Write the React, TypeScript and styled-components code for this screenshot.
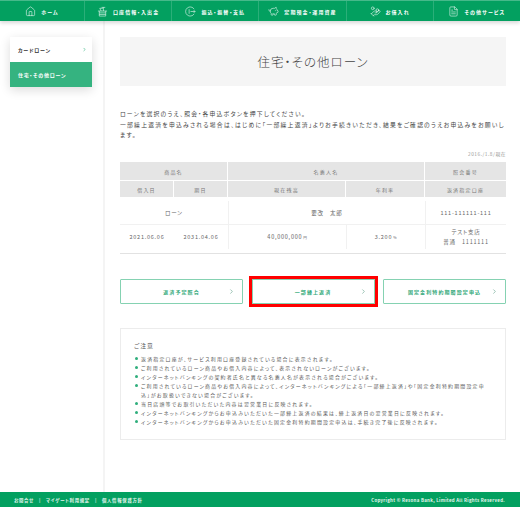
import { Fragment } from 'react';
import styled, { createGlobalStyle } from 'styled-components';
import { ChevronRight, FileText, HandCoins, Home, PiggyBank } from 'lucide-react';

const GREEN = '#03a060';
const FONT = `"Noto Sans CJK JP", "Noto Sans", "Liberation Sans", sans-serif`;

const GlobalStyle = createGlobalStyle`
  html, body {
    margin: 0;
    height: 507px;
    overflow: hidden;
    background: #fff;
  }
  * {
    box-sizing: border-box;
  }
`;

const Page = styled.div`
  display: flex;
  flex-direction: column;
  height: 507px;
  font-family: ${FONT};
  font-feature-settings: 'palt';
  color: #333;
`;

const Header = styled.nav`
  display: grid;
  grid-template-columns: 84px repeat(5, 1fr);
  flex: none;
  height: 21px;
  background: ${GREEN};
  border-top: 1px solid #46b98a;
  box-shadow: 0 2px 4px rgba(0, 0, 0, 0.16);
  position: relative;
`;

const NavItem = styled.a`
  display: flex;
  align-items: center;
  justify-content: center;
  gap: 5px;
  color: #fff;
  font-size: 5px;
  font-weight: 700;
  letter-spacing: 1.1px;
  white-space: nowrap;
  border-left: 1px solid rgba(255, 255, 255, 0.16);

  &:first-child {
    border-left: 0;
  }
`;

const Body = styled.div`
  display: flex;
  flex: 1;
  min-height: 0;
`;

const Side = styled.aside`
  flex: none;
  width: 105px;
  padding: 16px 0 0 10px;
  border-right: 2px solid #f4f4f4;
`;

const SideMenu = styled.ul`
  list-style: none;
  margin: 0;
  padding: 0;
  width: 82px;
  box-shadow: 0 3px 10px rgba(0, 0, 0, 0.14);
`;

const SideItem = styled.li<{ $active?: boolean }>`
  display: flex;
  align-items: center;
  justify-content: space-between;
  height: 25px;
  padding: 0 5px 0 8px;
  font-size: 5px;
  font-weight: 700;
  letter-spacing: 0.8px;
  color: ${({ $active }) => ($active ? '#fff' : '#333')};
  background: ${({ $active }) => ($active ? '#35b380' : '#fff')};

  svg {
    color: #35b380;
  }
`;

const Main = styled.main`
  flex: 1;
  min-width: 0;
  padding: 16px 14px 0 15px;
`;

const Title = styled.h1`
  display: flex;
  align-items: center;
  justify-content: center;
  height: 49px;
  margin: 0 0 23px;
  background: #f5f5f5;
  font-size: 12.5px;
  font-weight: 300;
  letter-spacing: 1px;
  color: #444;
`;

const Lead = styled.p`
  margin: 0;
  font-size: 5.8px;
  line-height: 10.7px;
  letter-spacing: 1.25px;
  color: #444;
`;

const DateNote = styled.div`
  margin-top: 7px;
  height: 14px;
  text-align: right;
  font-size: 4.8px;
  line-height: 11px;
  letter-spacing: 0.5px;
  color: #999;
`;

const Table = styled.div`
  display: grid;
  grid-template-columns: 54px 54px 118px 79px 1fr;
  grid-auto-rows: auto;
  padding-bottom: 4px;
  border-bottom: 1px solid #e2e2e2;
`;

const HeadCell = styled.div<{ $span?: number; $tall?: boolean }>`
  grid-column: span ${({ $span }) => $span ?? 1};
  display: flex;
  align-items: center;
  justify-content: center;
  height: ${({ $tall }) => ($tall ? 18 : 16)}px;
  margin: 0 1px ${({ $tall }) => ($tall ? 1 : 4)}px 0;
  background: #e5e5e5;
  font-size: 5px;
  letter-spacing: 1.2px;
  color: #777;

  &:nth-child(3),
  &:nth-child(8) {
    margin-right: 0;
  }
`;

const Cell = styled.div<{ $span?: number; $divider?: boolean; $rule?: boolean }>`
  grid-column: span ${({ $span }) => $span ?? 1};
  display: flex;
  flex-direction: column;
  align-items: center;
  justify-content: center;
  height: 24px;
  font-size: 5.5px;
  line-height: 10px;
  letter-spacing: 0.75px;
  color: #666;
  border-left: ${({ $divider }) => ($divider ? '1px solid #f1f1f1' : '0')};
  border-bottom: ${({ $rule }) => ($rule ? '1px solid #f1f1f1' : '0')};
`;

const CellRow = styled.span`
  display: block;
  white-space: pre;
`;

const Unit = styled.small`
  font-size: 3.6px;
  margin-left: 1px;
`;

const Buttons = styled.div`
  display: grid;
  grid-template-columns: repeat(3, 1fr);
  gap: 8.5px;
  margin-top: 24.5px;
`;

const ActionButton = styled.a<{ $marked?: boolean }>`
  display: grid;
  grid-template-columns: 1fr auto 1fr;
  align-items: center;
  height: 25px;
  padding: 0 7px;
  border: 1px solid #85d2b2;
  border-radius: ${({ $marked }) => ($marked ? 0 : 1)}px;
  outline: ${({ $marked }) => ($marked ? '3px solid #f00' : 'none')};
  font-size: 5px;
  font-weight: 700;
  letter-spacing: 1.1px;
  color: #30a878;
  white-space: nowrap;

  svg {
    grid-column: 3;
    justify-self: end;
    color: #5c9c84;
  }
`;

const Notice = styled.section`
  margin-top: 24px;
  height: 112px;
  padding: 12px 17px 0 13px;
  border: 1px solid #ececec;
`;

const NoticeTitle = styled.h2`
  margin: 0 0 4px;
  font-size: 5.8px;
  line-height: 9px;
  font-weight: 400;
  letter-spacing: 1.1px;
  color: #555;
`;

const NoticeList = styled.ul`
  list-style: none;
  margin: 0;
  padding: 0;
`;

const NoticeItem = styled.li`
  position: relative;
  padding-left: 7px;
  font-size: 4.9px;
  line-height: 9px;
  letter-spacing: 1.25px;
  color: #555;

  &::before {
    content: '';
    position: absolute;
    left: 1px;
    top: 3px;
    width: 3px;
    height: 3px;
    border-radius: 50%;
    background: #2fae7c;
  }
`;

const Footer = styled.footer`
  display: flex;
  flex: none;
  align-items: center;
  justify-content: space-between;
  height: 15px;
  padding: 0 15px 0 14px;
  background: ${GREEN};
  color: #e6f6ef;
  font-size: 4.4px;
  font-weight: 700;
  letter-spacing: 0.7px;
`;

const FooterLinks = styled.div`
  display: flex;
  gap: 5px;
`;

const Copyright = styled.span`
  letter-spacing: 0.3px;
`;

const navIconSize = 11;

const BasketIcon = () => (
  <svg width={navIconSize} height={navIconSize} viewBox="0 0 24 24" fill="none" stroke="currentColor" strokeWidth="1.2">
    <path d="M2 11h20M5 11v11h14V11M5 15h14M5 18.5h14M9 11 6 5h7M14 3v8M10 3h8" />
  </svg>
);

const TransferIcon = () => (
  <svg width={navIconSize} height={navIconSize} viewBox="0 0 24 24" fill="none" stroke="currentColor" strokeWidth="1.2">
    <path d="M20 7a10 10 0 1 0 0 10M9 7v10M12 12h10M19 9l3 3-3 3" />
  </svg>
);

const navItems = [
  { label: 'ホーム', icon: <Home size={navIconSize} strokeWidth={1.2} /> },
  { label: '口座情報・入出金', icon: <BasketIcon /> },
  { label: '振込・振替・支払', icon: <TransferIcon /> },
  { label: '定期預金・運用資産', icon: <PiggyBank size={navIconSize} strokeWidth={1.2} /> },
  { label: 'お借入れ', icon: <HandCoins size={navIconSize} strokeWidth={1.2} /> },
  { label: 'その他サービス', icon: <FileText size={navIconSize} strokeWidth={1.2} /> },
];

const notices = [
  '返済指定口座が、サービス利用口座登録されている場合に表示されます。',
  'ご利用されているローン商品やお借入内容によって、表示されないローンがございます。',
  'インターネットバンキングの契約者氏名と異なる名義人名が表示される場合がございます。',
  'ご利用されているローン商品やお借入内容によって、インターネットバンキングによる「一部繰上返済」や「固定金利特約期間設定申込」がお取扱いできない場合がございます。',
  '当日店頭等でお取引いただいた内容は翌営業日に反映されます。',
  'インターネットバンキングからお申込みいただいた一部繰上返済の結果は、繰上返済日の翌営業日に反映されます。',
  'インターネットバンキングからお申込みいただいた固定金利特約期間設定申込は、手続き完了後に反映されます。',
];

const actions = [
  { label: '返済予定照会' },
  { label: '一部繰上返済', marked: true },
  { label: '固定金利特約期間設定申込' },
];

const footerLinks = ['お問合せ', 'マイゲート利用規定', '個人情報保護方針'];

export default function App() {
  return (
    <Page>
      <GlobalStyle />
      <Header>
        {navItems.map((item) => (
          <NavItem key={item.label}>
            {item.icon}
            {item.label}
          </NavItem>
        ))}
      </Header>
      <Body>
        <Side>
          <SideMenu>
            <SideItem>
              カードローン
              <ChevronRight size={5} strokeWidth={3} />
            </SideItem>
            <SideItem $active>住宅・その他ローン</SideItem>
          </SideMenu>
        </Side>
        <Main>
          <Title>住宅・その他ローン</Title>
          <Lead>
            ローンを選択のうえ、照会・各申込ボタンを押下してください。
            <br />
            一部繰上返済を申込みされる場合は、はじめに「一部繰上返済」よりお手続きいただき、結果をご確認のうえお申込みをお願いします。
          </Lead>
          <DateNote>2016./1.8/現在</DateNote>
          <Table>
            <HeadCell $span={2} $tall>商品名</HeadCell>
            <HeadCell $span={2} $tall>名義人名</HeadCell>
            <HeadCell $tall>照会番号</HeadCell>
            <HeadCell>借入日</HeadCell>
            <HeadCell>期日</HeadCell>
            <HeadCell>現在残高</HeadCell>
            <HeadCell>年利率</HeadCell>
            <HeadCell>返済指定口座</HeadCell>

            <Cell $span={2} $rule>ローン</Cell>
            <Cell $span={2} $rule $divider>要改　太郎</Cell>
            <Cell $rule $divider>111-111111-111</Cell>
            <Cell>2021.06.06</Cell>
            <Cell>2031.04.06</Cell>
            <Cell $divider>
              <CellRow>40,000,000<Unit>円</Unit></CellRow>
            </Cell>
            <Cell $divider>
              <CellRow>3.200<Unit>%</Unit></CellRow>
            </Cell>
            <Cell $divider>
              <CellRow>テスト支店</CellRow>
              <CellRow>普通　1111111</CellRow>
            </Cell>
          </Table>
          <Buttons>
            {actions.map((action) => (
              <ActionButton key={action.label} $marked={action.marked}>
                <span />
                {action.label}
                <ChevronRight size={7} strokeWidth={2} />
              </ActionButton>
            ))}
          </Buttons>
          <Notice>
            <NoticeTitle>ご注意</NoticeTitle>
            <NoticeList>
              {notices.map((text) => (
                <NoticeItem key={text}>{text}</NoticeItem>
              ))}
            </NoticeList>
          </Notice>
        </Main>
      </Body>
      <Footer>
        <FooterLinks>
          {footerLinks.map((link, i) => (
            <Fragment key={link}>
              {i > 0 && <span>|</span>}
              <span>{link}</span>
            </Fragment>
          ))}
        </FooterLinks>
        <Copyright>Copyright © Resona Bank, Limited All Rights Reserved.</Copyright>
      </Footer>
    </Page>
  );
}
